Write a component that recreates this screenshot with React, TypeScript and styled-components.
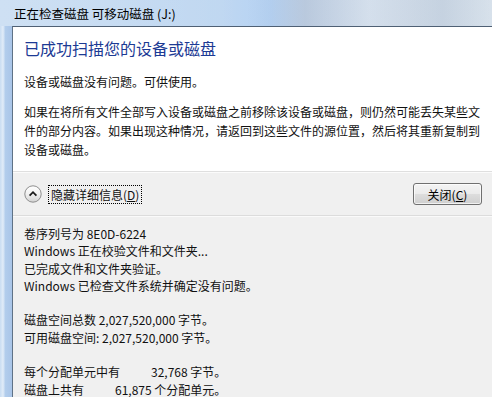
import styled, { createGlobalStyle } from 'styled-components';

const GlobalStyle = createGlobalStyle`
  html, body {
    margin: 0;
    padding: 0;
    background: #c4d9f0;
  }
  body {
    font-family: "Noto Sans CJK SC", "Noto Sans", sans-serif;
    font-size: 12px;
    color: #111;
  }
`;

const ExpandIcon = () => (
  <svg width="18" height="18" viewBox="0 0 18 18">
    <defs>
      <linearGradient id="knob" x1="0" y1="0" x2="0" y2="1">
        <stop offset="0" stopColor="#ffffff" />
        <stop offset="0.5" stopColor="#f1f1f1" />
        <stop offset="1" stopColor="#d2d2d2" />
      </linearGradient>
    </defs>
    <circle cx="9" cy="9" r="8.2" fill="url(#knob)" stroke="#8e8e8e" strokeWidth="1" />
    <path d="M5.6 10.6 L9 7.2 L12.4 10.6" fill="none" stroke="#1b1b1b" strokeWidth="1.8" />
  </svg>
);

const App = () => {
  return (
    <>
      <GlobalStyle />
      <Window>
        <TitleBar>正在检查磁盘 可移动磁盘 (J:)</TitleBar>
        <Body>
          <FrameEdge />
          <Panel>
            <MainArea>
              <Heading>已成功扫描您的设备或磁盘</Heading>
              <Status>设备或磁盘没有问题。可供使用。</Status>
              <Note>
                如果在将所有文件全部写入设备或磁盘之前移除该设备或磁盘，则仍然可能丢失某些文
                <br />
                件的部分内容。如果出现这种情况，请返回到这些文件的源位置，然后将其重新复制到
                <br />
                设备或磁盘。
              </Note>
            </MainArea>
            <ExpanderRow>
              <ExpandIcon />
              <FocusLabel>
                隐藏详细信息(<u>D</u>)
              </FocusLabel>
              <CloseButton>
                关闭(<u>C</u>)
              </CloseButton>
            </ExpanderRow>
            <Details>
              <Block>
                <Line>卷序列号为 8E0D-6224</Line>
                <Line>Windows 正在校验文件和文件夹...</Line>
                <Line>已完成文件和文件夹验证。</Line>
                <Line>Windows 已检查文件系统并确定没有问题。</Line>
              </Block>
              <Block>
                <Line>磁盘空间总数 2,027,520,000 字节。</Line>
                <Line>可用磁盘空间: 2,027,520,000 字节。</Line>
              </Block>
              <Block>
                <Line>
                  <Label>每个分配单元中有</Label>32,768 字节。
                </Line>
                <Line>
                  <Label>磁盘上共有</Label>61,875 个分配单元。
                </Line>
              </Block>
            </Details>
          </Panel>
        </Body>
      </Window>
    </>
  );
};

export default App;

const Window = styled.div`
  width: 492px;
  height: 397px;
  overflow: hidden;
  display: flex;
  flex-direction: column;
  background: linear-gradient(
    90deg,
    #c6dbf1 0%,
    #bfd7f1 45%,
    #b6d3f4 55%,
    #c5d5e8 62%,
    #cbd8e7 80%,
    #d3dee9 100%
  );
`;

const TitleBar = styled.div`
  height: 26px;
  flex-shrink: 0;
  padding-left: 14px;
  display: flex;
  align-items: center;
  font-size: 12.5px;
  color: #000;
  white-space: nowrap;
  background: linear-gradient(
    90deg,
    rgba(255, 255, 255, 0.15) 0%,
    rgba(255, 255, 255, 0) 50%,
    rgba(150, 165, 190, 0.25) 62%,
    rgba(255, 255, 255, 0.2) 75%,
    rgba(160, 175, 195, 0.2) 90%,
    rgba(255, 255, 255, 0.1) 100%
  );
`;

const Body = styled.div`
  flex: 1;
  display: flex;
  min-height: 0;
`;

const FrameEdge = styled.div`
  width: 12px;
  flex-shrink: 0;
  background: linear-gradient(90deg, #c9ddf2 0%, #e1ecf8 25%, #b2cdec 45%, #a9c5e8 100%);
`;

const Panel = styled.div`
  flex: 1;
  display: flex;
  flex-direction: column;
  border-left: 1px solid #5f7286;
  border-top: 1px solid #4f6074;
  background: #f0f0f0;
  min-width: 0;
  overflow: hidden;

  & > * {
    flex-shrink: 0;
  }
`;

const MainArea = styled.div`
  background: #fff;
  padding: 10px 0 12px 11px;
  border-bottom: 1px solid #dfdfdf;
`;

const Heading = styled.div`
  font-size: 16px;
  line-height: 22px;
  color: #1c3a94;
`;

const Status = styled.div`
  margin-top: 14px;
  line-height: 18px;
`;

const Note = styled.div`
  margin-top: 11px;
  line-height: 19px;
  white-space: nowrap;
`;

const ExpanderRow = styled.div`
  height: 42px;
  display: flex;
  align-items: center;
  padding: 0 10px 0 11px;
  border-top: 1px solid #fbfbfb;
  border-bottom: 1px solid #dcdcdc;
`;

const FocusLabel = styled.span`
  margin-left: 6px;
  padding: 0 2px;
  line-height: 17px;
  border: 1px dotted #000;
  white-space: nowrap;
`;

const CloseButton = styled.button`
  margin-left: auto;
  width: 69px;
  height: 22px;
  padding: 0;
  font-family: inherit;
  font-size: 12px;
  color: #000;
  border: 1px solid #707070;
  border-radius: 3px;
  background: linear-gradient(180deg, #f4f4f4 0%, #ebebeb 48%, #dddddd 52%, #cfcfcf 100%);
  box-shadow: inset 0 0 0 1px rgba(255, 255, 255, 0.7);
`;

const Details = styled.div`
  padding: 8px 0 0 11px;
  border-top: 1px solid #fafafa;
`;

const Block = styled.div`
  margin-bottom: 17.3px;
`;

const Line = styled.div`
  line-height: 17.3px;
  white-space: nowrap;
`;

const Label = styled.span`
  margin-right: 31px;
`;
